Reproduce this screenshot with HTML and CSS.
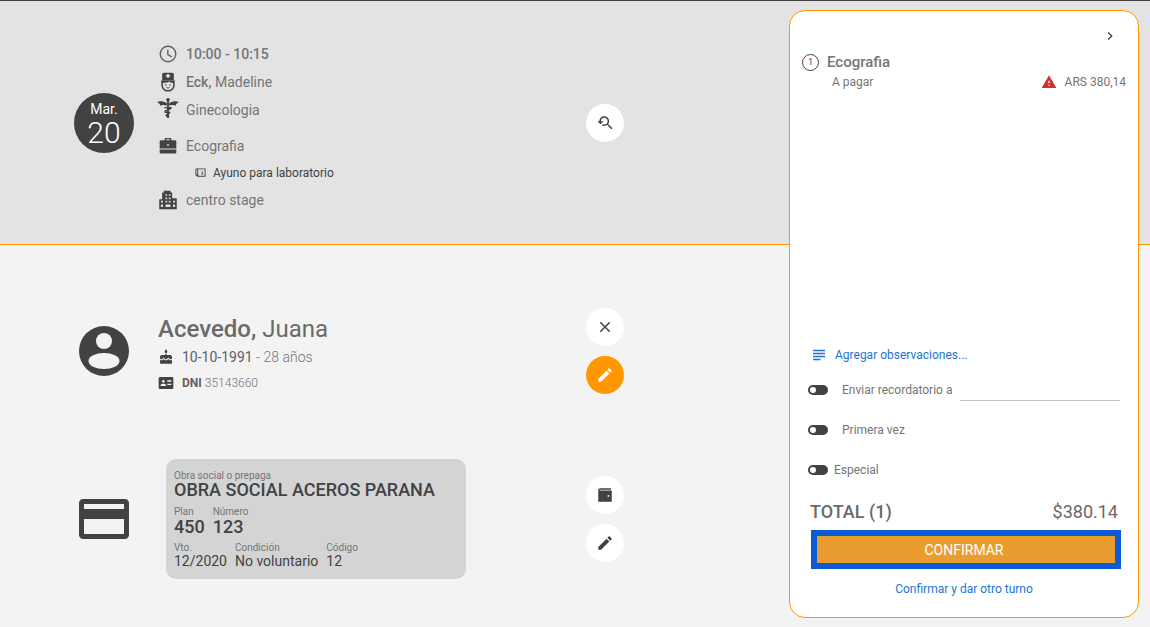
FILE: index.html
```html
<!DOCTYPE html>
<html lang="es">
<head>
  <meta charset="UTF-8">
  <title>Confirmar turno</title>
  <link rel="stylesheet" href="styles.css">
</head>
<body>
  <!-- Turno -->
  <section class="turno">
    <div class="fecha">
      <span class="fecha-mes">Mar.</span>
      <span class="fecha-dia">20</span>
    </div>
    <ul class="datos">
      <li class="dato">
        <svg class="dato-icon" viewBox="0 0 24 24"><circle cx="12" cy="12" r="9.300" fill="none" stroke="#616161" stroke-width="1.700"/><path fill="none" stroke="#616161" stroke-width="1.600" d="M11.800 6.500V12.600L16.500 15.400"/></svg>
        <span class="dato-fuerte">10:00 - 10:15</span>
      </li>
      <li class="dato">
        <svg class="dato-icon" viewBox="0 0 24 24"><path fill-rule="evenodd" d="M5 3c0-1.100.9-2 2-2h10c1.100 0 2 .9 2 2v6.500H5zM11 2.300v1.700H9.300v1.600H11v1.700h2V5.600h1.700V4H13V2.300z"/><path fill-rule="evenodd" d="M4 10h16v5.500c0 4.400-3.600 8-8 8s-8-3.600-8-8zm1.800 3.200v2.300c0 3.400 2.800 6.200 6.200 6.200s6.200-2.800 6.200-6.200v-2.300c-2.200 0-3.600-.5-4.500-1.700-1.200 1.200-4.600 1.700-7.900 1.700z"/><circle cx="9.500" cy="15.600" r="1"/><circle cx="14.500" cy="15.600" r="1"/><path fill="none" stroke="#424242" stroke-width="1" d="M9.800 18.500c1.300 1 3.100 1 4.400 0"/></svg>
        <span><span class="dato-fuerte">Eck,</span> Madeline</span>
      </li>
      <li class="dato">
        <svg class="dato-icon dato-icon-ancho" viewBox="0 0 24 24"><path d="M0 5.500c3-1.500 7-1.300 10.800 1.200v2.600C7.500 8.200 5 8.800 3.800 9.500 3.500 8 2 6.500 0 5.500zM24 5.500c-3-1.500-7-1.300-10.800 1.200v2.600c3.300-1.100 5.800-.5 7 .2.300-1.500 1.800-3 3.800-4z"/><rect x="11" y="2" width="2" height="21"/><circle cx="12" cy="3" r="2"/><path d="M8 11h8c.8 1.800-1 3-4 3.700-1.500.4-2 .9-1.500 1.500h4c.5 1.500-.8 2.300-2.500 2.800-1 .3-1 .8-.5 1.200h2v1.300h-3.500c-1.200-1-.9-2.600 1-3.300.7-.3 1-.4 1.100-.7h-3.600c-1-1.500-.6-3 1.800-3.700 1.800-.5 2.700-.9 2.900-1.500H8z"/></svg>
        <span>Ginecologia</span>
      </li>
      <li class="dato dato-practica">
        <svg class="dato-icon" viewBox="0 0 24 24"><path fill-rule="evenodd" d="M8 3.800C8 3.100 8.600 2.500 9.300 2.500h5.400c.7 0 1.300.6 1.300 1.300V5h4.500C21.300 5 22 5.700 22 6.500V15H2V6.500C2 5.700 2.700 5 3.500 5H8zM9.800 3.800V5h4.400V3.800zM11 9.800v1.800h2V9.800z"/><path d="M2 16.300h20v3.200c0 .8-.7 1.500-1.500 1.500h-17c-.8 0-1.500-.7-1.500-1.500z"/></svg>
        <span>Ecografia</span>
      </li>
      <li class="dato-prep">
        <svg class="prep-icon" viewBox="0 0 24 24"><path fill-rule="evenodd" d="M1 3h22v18H5l-4-3.500zM3 5v11.500h2V5zm4 0v14h14V5zM14.500 8H17v2h-2.500zm0 3.500H17V17h-2.500z"/></svg>
        <span>Ayuno para laboratorio</span>
      </li>
      <li class="dato">
        <svg class="dato-icon" viewBox="0 0 24 24"><path fill-rule="evenodd" d="M7 1h8v2h2v7h5.500v13H1.500V11H5V3h2zM9 5v2h2V5zm4 0v2h2V5zM9 9v2h2V9zm4 0v2h2V9zm-9.500 4v2H6v-2zm5.500 0v2h2v-2zm4 0v2h2v-2zm5 0v2h2.500v-2zM3.500 17.500v3H6v-3zm5.500 0v3h6v-3zm9 0v3h2.500v-3z"/></svg>
        <span>centro stage</span>
      </li>
    </ul>
    <div class="acciones acciones-turno">
      <button class="redondo"><svg viewBox="0 0 24 24"><path d="M17.010 14h-.8l-.27-.27c.98-1.140 1.570-2.610 1.570-4.230 0-3.590-2.910-6.500-6.500-6.500s-6.500 3-6.500 6.500H2l3.840 4 4.160-4H6.510C6.510 7 8.530 5 11.010 5s4.500 2.010 4.500 4.500c0 2.480-2.020 4.500-4.500 4.500-.65 0-1.260-.14-1.820-.38L7.710 15.100c.97.57 2.090.9 3.300.9 1.610 0 3.080-.59 4.220-1.570l.27.27v.79l5.010 4.990L22 19l-4.990-5z"/></svg></button>
    </div>
  </section>

  <!-- Paciente -->
  <section class="paciente">
    <div class="fila fila-persona">
      <svg class="icono-grande" viewBox="0 0 50 50"><circle cx="25" cy="25" r="25" fill="#424242"/><circle cx="25" cy="15" r="8" fill="#f3f3f3"/><ellipse cx="25" cy="35" rx="15.500" ry="8" fill="#f3f3f3"/></svg>
      <div class="persona">
        <h1 class="persona-nombre"><strong>Acevedo,</strong> Juana</h1>
        <div class="persona-dato persona-nacimiento">
          <svg class="mini-icon" viewBox="0 0 24 24"><path d="M12 6c1.110 0 2-.9 2-2 0-.38-.1-.73-.29-1.030L12 0l-1.710 2.970c-.19.3-.29.65-.29 1.030 0 1.100.9 2 2 2zm4.600 9.990l-1.070-1.070-1.080 1.070c-1.300 1.300-3.580 1.310-4.890 0l-1.070-1.070-1.090 1.070C6.750 16.640 5.880 17 4.960 17c-.73 0-1.400-.23-1.960-.61V21c0 .55.45 1 1 1h16c.55 0 1-.45 1-1v-4.610c-.56.38-1.230.61-1.960.61-.92 0-1.790-.36-2.440-1.010zM18 9h-5V7h-2v2H6c-1.660 0-3 1.340-3 3v1.540c0 1.080.88 1.960 1.960 1.960.52 0 1.020-.2 1.380-.57l2.140-2.130 2.130 2.130c.74.74 2.030.74 2.770 0l2.140-2.130 2.130 2.130c.37.37.86.57 1.380.57 1.080 0 1.960-.88 1.960-1.960V12C21 10.340 19.660 9 18 9z"/></svg>
          <span class="persona-edad"><span class="persona-fuerte">10-10-1991</span> - 28 años</span>
        </div>
        <div class="persona-dato persona-dni">
          <svg class="mini-icon" viewBox="0 0 24 24"><path fill-rule="evenodd" d="M3 3h18c1.100 0 2 .9 2 2v14c0 1.100-.9 2-2 2H3c-1.100 0-2-.9-2-2V5c0-1.100.9-2 2-2zm11 5v2h6V8zm0 5v2h6v-2zM8 7.500a2 2 0 1 0 0 4 2 2 0 0 0 0-4zM4 16.500h8v-1.500c0-1.300-2.700-2-4-2s-4 .7-4 2z"/></svg>
          <span><strong class="dni-label">DNI</strong> <span class="dni-num">35143660</span></span>
        </div>
      </div>
      <div class="acciones">
        <button class="redondo"><svg viewBox="0 0 24 24"><path d="M19 6.410L17.590 5 12 10.590 6.410 5 5 6.410 10.590 12 5 17.590 6.410 19 12 13.410 17.590 19 19 17.590 13.410 12z"/></svg></button>
        <button class="redondo redondo-naranja"><svg viewBox="0 0 24 24"><path d="M3 17.250V21h3.750L17.810 9.940l-3.750-3.750L3 17.250zM20.710 7.040c.39-.39.39-1.020 0-1.410l-2.340-2.340c-.39-.39-1.020-.39-1.410 0l-1.830 1.830 3.750 3.750 1.830-1.830z"/></svg></button>
      </div>
    </div>

    <div class="fila fila-obra">
      <svg class="icono-grande icono-tarjeta" viewBox="0 0 50 40"><path fill="#424242" fill-rule="evenodd" d="M4 0h42c2.200 0 4 1.800 4 4v32c0 2.200-1.800 4-4 4H4c-2.200 0-4-1.800-4-4V4c0-2.200 1.800-4 4-4zM5 5v5h40V5zm0 15v15h40V20z"/></svg>
      <div class="credencial">
        <span class="cred-label">Obra social o prepaga</span>
        <span class="cred-nombre">OBRA SOCIAL ACEROS PARANA</span>
        <div class="cred-fila cred-fila-plan">
          <div class="cred-campo"><span class="cred-label">Plan</span><span class="cred-plan">450</span></div>
          <div class="cred-campo"><span class="cred-label">Número</span><span class="cred-plan">123</span></div>
        </div>
        <div class="cred-fila cred-fila-vto">
          <div class="cred-campo"><span class="cred-label">Vto.</span><span class="cred-valor">12/2020</span></div>
          <div class="cred-campo"><span class="cred-label">Condición</span><span class="cred-valor">No voluntario</span></div>
          <div class="cred-campo"><span class="cred-label">Código</span><span class="cred-valor">12</span></div>
        </div>
      </div>
      <div class="acciones">
        <button class="redondo"><svg viewBox="0 0 24 24"><path fill-rule="evenodd" d="M3 5.500C3 4.100 4.100 3 5.500 3H20v2H5v1h16v15H3zM16.500 12a1.200 1.200 0 1 0 0 2.400 1.200 1.200 0 0 0 0-2.400z"/></svg></button>
        <button class="redondo"><svg viewBox="0 0 24 24"><path d="M3 17.250V21h3.750L17.810 9.940l-3.750-3.750L3 17.250zM20.710 7.040c.39-.39.39-1.020 0-1.410l-2.340-2.340c-.39-.39-1.020-.39-1.410 0l-1.830 1.830 3.750 3.750 1.830-1.830z"/></svg></button>
      </div>
    </div>
  </section>

  <!-- Resumen -->
  <aside class="resumen">
    <div class="resumen-cerrar">
      <svg viewBox="0 0 24 24"><path d="M10 6L8.590 7.410 13.170 12l-4.580 4.590L10 18l6-6z"/></svg>
    </div>
    <div class="item">
      <span class="item-num">1</span>
      <span class="item-nombre">Ecografia</span>
    </div>
    <div class="item-pago">
      <span>A pagar</span>
      <span class="item-monto">
        <svg viewBox="0 0 24 24"><path d="M1 21h22L12 2 1 21zm12-3h-2v-2h2v2zm0-4h-2v-4h2v4z"/></svg>
        <span>ARS 380,14</span>
      </span>
    </div>

    <div class="opciones">
      <a class="observaciones" href="#">
        <svg viewBox="0 0 24 24"><path d="M14 17H4v2h10v-2zm6-8H4v2h16V9zM4 15h16v-2H4v2zM4 5v2h16V5H4z"/></svg>
        <span>Agregar observaciones...</span>
      </a>
      <div class="opcion">
        <span class="toggle"></span>
        <span class="opcion-label">Enviar recordatorio a</span>
        <span class="opcion-input"></span>
      </div>
      <div class="opcion">
        <span class="toggle"></span>
        <span class="opcion-label">Primera vez</span>
      </div>
      <div class="opcion">
        <span class="toggle"></span>
        <span class="opcion-label opcion-label-corta">Especial</span>
      </div>
    </div>

    <div class="total">
      <strong class="total-label">TOTAL (1)</strong>
      <span>$380.14</span>
    </div>
    <button class="confirmar">CONFIRMAR</button>
    <a class="otro-turno" href="#">Confirmar y dar otro turno</a>
  </aside>
</body>
</html>
```

FILE: styles.css
```css
* {
  box-sizing: border-box;
}

body {
  margin: 0;
  height: 100vh;
  overflow: hidden;
  font-family: 'Roboto', sans-serif;
  color: #757575;
  background: #f3f3f3;
}

/* Turno */
.turno {
  display: flex;
  align-items: center;
  height: 245px;
  padding-left: 74px;
  background: #e3e3e3;
  border-top: 1px solid #424242;
  border-bottom: 1px solid #ff9800;
}

.fecha {
  display: flex;
  flex-direction: column;
  align-items: center;
  justify-content: center;
  flex: none;
  width: 60px;
  height: 60px;
  padding-top: 4px;
  border-radius: 50%;
  background: #424242;
  color: #fff;
}

.fecha-mes {
  font-size: 14px;
  line-height: 16px;
}

.fecha-dia {
  font-size: 30px;
  line-height: 32px;
  font-weight: 300;
}

.datos {
  width: 428px;
  margin: 8px 0 0 24px;
  padding: 0;
  list-style: none;
}

.dato {
  display: flex;
  align-items: center;
  gap: 8px;
  height: 28px;
  font-size: 14px;
}

.dato-practica {
  margin-top: 8px;
}

.dato-fuerte {
  font-weight: 500;
}

.dato-icon {
  flex: none;
  width: 20px;
  height: 20px;
  fill: #424242;
}

.dato-icon-ancho {
  margin: -4px -1px 0 -1px;
  width: 22px;
  height: 22px;
}

.dato-prep {
  display: flex;
  align-items: center;
  gap: 7px;
  height: 26px;
  padding-left: 37px;
  font-size: 12px;
  color: #424242;
}

.prep-icon {
  width: 11px;
  height: 11px;
  fill: #424242;
}

/* Botones redondos */
.acciones {
  display: flex;
  flex-direction: column;
  gap: 10px;
  flex: none;
  width: 38px;
}

.redondo {
  display: flex;
  align-items: center;
  justify-content: center;
  width: 38px;
  height: 38px;
  padding: 0;
  border: none;
  border-radius: 50%;
  background: #fff;
}

.redondo svg {
  width: 18px;
  height: 18px;
  fill: #424242;
}

.redondo-naranja {
  background: #ff9800;
}

.redondo-naranja svg {
  fill: #fff;
}

/* Paciente */
.paciente {
  display: flex;
  flex-direction: column;
}

.fila {
  display: flex;
  align-items: center;
  padding-left: 79px;
}

.fila-persona {
  height: 214px;
  padding-bottom: 2px;
}

.fila-obra {
  height: 120px;
}

.icono-grande {
  flex: none;
  width: 50px;
  height: 50px;
}

.icono-tarjeta {
  height: 40px;
}

.persona {
  width: 428px;
  margin-left: 29px;
  padding-top: 6px;
}

.persona-nombre {
  margin: 0 0 4px;
  font-size: 24px;
  line-height: 28px;
  font-weight: 400;
  color: #6a6a6a;
}

.persona-nombre strong {
  font-weight: 500;
}

.persona-dato {
  display: flex;
  align-items: center;
  gap: 8px;
}

.persona-nacimiento {
  height: 20px;
  font-size: 14px;
}

.persona-edad {
  font-weight: 300;
}

.persona-dni {
  height: 20px;
  margin-top: 6px;
  font-size: 12px;
}

.persona-fuerte {
  font-weight: 400;
  color: #616161;
}

.dni-label {
  font-weight: 700;
  color: #616161;
}

.dni-num {
  font-weight: 300;
}

.mini-icon {
  flex: none;
  width: 16px;
  height: 16px;
  fill: #424242;
}

.credencial {
  flex: none;
  display: flex;
  flex-direction: column;
  width: 300px;
  height: 120px;
  margin: 0 120px 0 37px;
  padding: 12px 8px 0;
  border-radius: 10px;
  background: #d4d4d4;
  color: #424242;
}

.cred-label {
  display: block;
  font-size: 10px;
  line-height: 10px;
  color: #757575;
}

.cred-nombre {
  font-size: 18px;
  line-height: 18px;
  font-weight: 500;
}

.cred-fila {
  display: flex;
}

.cred-fila-plan {
  gap: 8px;
  margin-top: 8px;
}

.cred-fila-vto {
  gap: 8px;
  margin-top: 7px;
}

.cred-campo {
  display: flex;
  flex-direction: column;
}

.cred-plan {
  font-size: 18px;
  line-height: 19px;
  font-weight: 500;
}

.cred-valor {
  font-size: 14px;
  line-height: 16px;
}

/* Resumen */
.resumen {
  position: absolute;
  top: 10px;
  right: 11px;
  display: flex;
  flex-direction: column;
  width: 350px;
  height: 608px;
  padding: 0 12px 0 12px;
  background: #fff;
  border: 1px solid #ff9800;
  border-radius: 16px;
}

.resumen-cerrar {
  display: flex;
  justify-content: flex-end;
  height: 41px;
  padding: 16px 8px 0 0;
}

.resumen-cerrar svg {
  width: 16px;
  height: 18px;
  fill: #424242;
}

.item {
  display: flex;
  align-items: center;
  gap: 8px;
  height: 20px;
}

.item-num {
  display: flex;
  align-items: center;
  justify-content: center;
  width: 17px;
  height: 17px;
  border: 1px solid #424242;
  border-radius: 50%;
  font-size: 9px;
  color: #424242;
}

.item-nombre {
  font-size: 15px;
  font-weight: 500;
}

.item-pago {
  display: flex;
  justify-content: space-between;
  align-items: center;
  height: 20px;
  padding-left: 30px;
  font-size: 12px;
}

.item-monto {
  display: flex;
  align-items: center;
  gap: 8px;
}

.item-monto svg {
  width: 16px;
  height: 16px;
  fill: #d32f2f;
}

.opciones {
  display: flex;
  flex-direction: column;
  margin-top: 254px;
  padding-left: 6px;
}

.observaciones {
  display: flex;
  align-items: center;
  gap: 7px;
  height: 18px;
  padding-left: 2px;
  margin-bottom: 6px;
  font-size: 12px;
  color: #1976d2;
  text-decoration: none;
}

.observaciones svg {
  width: 18px;
  height: 18px;
  fill: #1976d2;
}

.opcion {
  display: flex;
  align-items: center;
  height: 40px;
  font-size: 12px;
}

.toggle {
  position: relative;
  flex: none;
  width: 20px;
  height: 10px;
  border-radius: 5px;
  background: #424242;
}

.toggle::after {
  content: "";
  position: absolute;
  top: 2px;
  left: 2px;
  width: 6px;
  height: 6px;
  border-radius: 50%;
  background: #fff;
}

.opcion-label {
  margin-left: 14px;
  white-space: nowrap;
}

.opcion-label-corta {
  margin-left: 6px;
}

.opcion-input {
  width: 160px;
  height: 20px;
  margin: 2px 0 0 8px;
  border-bottom: 1px solid #c4c4c4;
}

.total {
  display: flex;
  justify-content: space-between;
  align-items: center;
  height: 24px;
  margin-top: 9px;
  padding: 0 8px;
  font-size: 18px;
  color: #6a6a6a;
}

.total-label {
  font-weight: 500;
}

.confirmar {
  width: 310px;
  height: 39px;
  margin: 7px 0 0 9px;
  padding: 0 4px 0 0;
  flex: none;
  border: 6px solid #0c5bd6;
  background: #e99d2f;
  color: #fff;
  font-family: inherit;
  font-size: 14px;
}

.otro-turno {
  margin-top: 13px;
  text-align: center;
  font-size: 12px;
  color: #1976d2;
  text-decoration: none;
}
```
